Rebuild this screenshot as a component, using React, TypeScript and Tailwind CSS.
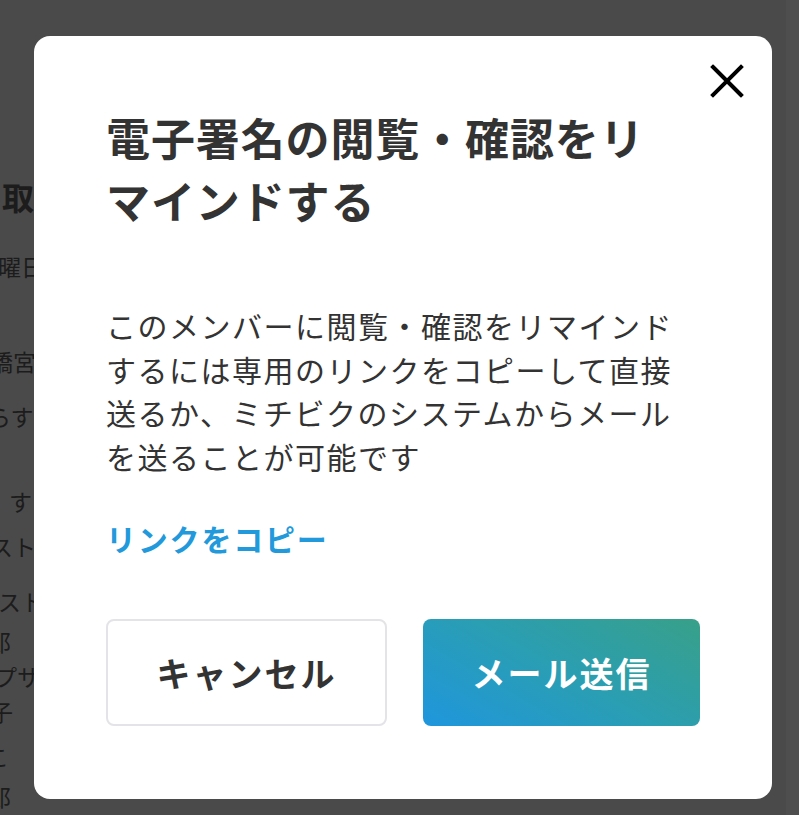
const bgLines: { text: string; cls: string }[] = [
  { text: "取引先", cls: "mt-[176px] ml-[2px] text-[32px] font-bold leading-[40px]" },
  { text: "曜日", cls: "mt-[35px] -ml-[2px] text-[23px] leading-[30px]" },
  { text: "橋宮", cls: "mt-[65px] -ml-[10px] text-[23px] leading-[30px]" },
  { text: "らす", cls: "mt-[25px] -ml-[12px] text-[23px] leading-[30px]" },
  { text: "す", cls: "mt-[55px] ml-[9px] text-[23px] leading-[30px]" },
  { text: "スト", cls: "mt-[15px] -ml-[10px] text-[23px] leading-[30px]" },
  { text: "スト", cls: "mt-[25px] -ml-[2px] text-[23px] leading-[30px]" },
  { text: "郎", cls: "mt-[10px] -ml-[12px] text-[23px] leading-[30px]" },
  { text: "プサ", cls: "mt-[5px] -ml-[6px] text-[23px] leading-[30px]" },
  { text: "子", cls: "mt-[5px] -ml-[10px] text-[23px] leading-[30px]" },
  { text: "こ", cls: "mt-[15px] -ml-[14px] text-[23px] leading-[30px]" },
  { text: "郎", cls: "mt-[10px] -ml-[12px] text-[23px] leading-[30px]" },
];

function CloseIcon() {
  return (
    <svg width="34" height="34" viewBox="0 0 34 34" fill="none">
      <path
        d="M3 3L31 31M31 3L3 31"
        stroke="currentColor"
        strokeWidth="4"
        strokeLinecap="square"
      />
    </svg>
  );
}

export default function App() {
  return (
    <div
      className="relative h-[815px] w-[799px] overflow-hidden bg-[#4a4a4a]"
      style={{ fontFamily: '"Noto Sans CJK JP", "Noto Sans", sans-serif' }}
    >
      {/* page behind the overlay */}
      <div className="flex h-full">
        <div className="flex w-[786px] flex-col text-[#1c1c1c]">
          {bgLines.map((l, i) => (
            <div key={i} className={`whitespace-nowrap ${l.cls}`}>
              {l.text}
            </div>
          ))}
        </div>
        <div className="h-full flex-1 bg-[#4e4e4e]" />
      </div>

      {/* dialog */}
      <div className="absolute left-[34px] top-[36px] flex h-[763px] w-[738px] flex-col rounded-[16px] bg-white px-[72px] pt-[70px] pb-[73px] text-[#333333]">
        <button className="absolute right-[28px] top-[28px] flex h-[34px] w-[34px] items-center justify-center text-black">
          <CloseIcon />
        </button>

        <h2 className="max-w-[560px] text-[44px] font-bold leading-[63px] tracking-[0.02em]">
          電子署名の閲覧・確認をリマインドする
        </h2>

        <p className="mt-[72px] text-[30px] leading-[43.5px] tracking-[0.05em]">
          このメンバーに閲覧・確認をリマインドするには専用のリンクをコピーして直接送るか、ミチビクのシステムからメールを送ることが可能です
        </p>

        <button className="mt-[39px] self-start text-[30px] font-bold leading-[43.5px] tracking-[0.06em] text-[#2299db]">
          リンクをコピー
        </button>

        <div className="mt-auto flex gap-[36px]">
          <button className="flex h-[107px] flex-1 items-center justify-center rounded-[8px] border-2 border-[#e3e3e8] bg-white text-[34px] font-bold tracking-[0.06em] text-[#333333]">
            キャンセル
          </button>
          <button className="flex h-[107px] flex-1 items-center justify-center rounded-[8px] bg-[linear-gradient(30deg,#1f96dd,#2a9eb3_50%,#38a089)] text-[34px] font-bold tracking-[0.06em] text-white">
            メール送信
          </button>
        </div>
      </div>
    </div>
  );
}
